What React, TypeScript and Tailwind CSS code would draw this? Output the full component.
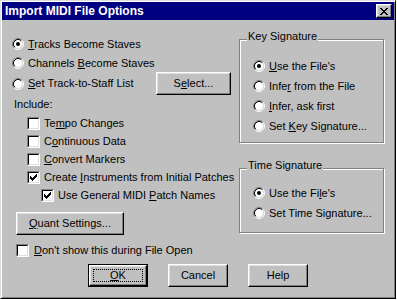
import type { ReactNode } from 'react';

const font = "font-['Liberation_Sans',Arial,sans-serif]";

function Radio({ checked }: { checked?: boolean }) {
  return (
    <svg width="12" height="12" viewBox="0 0 12 12" className="shrink-0">
      <circle cx="6" cy="6" r="4.2" fill="#fff" />
      <path d="M2.11 9.89A5.5 5.5 0 0 1 9.89 2.11" fill="none" stroke="#808080" />
      <path d="M9.89 2.11A5.5 5.5 0 0 1 2.11 9.89" fill="none" stroke="#fff" />
      <path d="M2.82 9.18A4.5 4.5 0 0 1 9.18 2.82" fill="none" stroke="#000" />
      <path d="M9.18 2.82A4.5 4.5 0 0 1 2.82 9.18" fill="none" stroke="#dfdfdf" />
      {checked && <circle cx="6" cy="6" r="2" fill="#000" />}
    </svg>
  );
}

function Check({ checked }: { checked?: boolean }) {
  return (
    <span className="flex w-[13px] h-[13px] shrink-0 border border-t-[#808080] border-l-[#808080] border-r-white border-b-white">
      <span className="flex flex-1 items-center justify-center bg-white border border-t-black border-l-black border-r-[#dfdfdf] border-b-[#dfdfdf]">
        {checked && (
          <svg width="7" height="7" viewBox="0 0 7 7" shapeRendering="crispEdges">
            <path
              d="M6 0h1v1h-1zM5 1h2v1h-2zM0 2h1v1h-1zM4 2h3v1h-3zM0 3h2v1h-2zM3 3h3v1h-3zM0 4h5v1h-5zM1 5h3v1h-3zM2 6h1v1h-1z"
              fill="#000"
            />
          </svg>
        )}
      </span>
    </span>
  );
}

function RadioRow({ checked, children, h = 'h-[20px]' }: { checked?: boolean; children: ReactNode; h?: string }) {
  return (
    <div className={`flex items-center gap-[4px] ${h}`}>
      <Radio checked={checked} />
      <span>{children}</span>
    </div>
  );
}

function CheckRow({ checked, children, indent }: { checked?: boolean; children: ReactNode; indent: string }) {
  return (
    <div className={`flex items-center gap-[4px] h-[18px] ${indent}`}>
      <Check checked={checked} />
      <span>{children}</span>
    </div>
  );
}

function Btn({ children, w, isDefault }: { children: ReactNode; w: string; isDefault?: boolean }) {
  const face = (
    <span className="relative flex flex-1 items-center justify-center border border-t-white border-l-white border-r-black border-b-black shadow-[inset_-1px_-1px_0_#808080,inset_1px_1px_0_#dfdfdf]">
      {isDefault && <span className="absolute inset-[3px] border border-dotted border-black" />}
      <span className="relative">{children}</span>
    </span>
  );
  if (isDefault) {
    return <div className={`flex h-[23px] ${w} border border-black`}>{face}</div>;
  }
  return <div className={`flex h-[23px] ${w}`}>{face}</div>;
}

function Group({ title, h, children }: { title: string; h: string; children: ReactNode }) {
  return (
    <div className={`relative w-[145px] ${h} border border-[#808080] shadow-[inset_1px_1px_0_#fff,1px_1px_0_#fff]`}>
      <span className="absolute -top-[10px] left-[7px] px-[1px] leading-[13px] bg-[#c0c0c0]">{title}</span>
      {children}
    </div>
  );
}

export default function App() {
  return (
    <div className={`${font} text-[11px] leading-[13px] text-black`}>
      <div className="flex flex-col w-[396px] h-[299px] bg-[#c0c0c0] p-[1px] border border-t-[#dfdfdf] border-l-[#dfdfdf] border-r-black border-b-black shadow-[inset_1px_1px_0_#fff,inset_-1px_-1px_0_#808080]">
        <div className="flex items-center justify-between h-[18px] bg-[#000080] pl-[3px] pr-[2px]">
          <span className="text-white font-bold text-[12px]">Import MIDI File Options</span>
          <div className="flex items-center justify-center w-[16px] h-[14px] border border-t-white border-l-white border-r-black border-b-black shadow-[inset_-1px_-1px_0_#808080,inset_1px_1px_0_#dfdfdf] bg-[#c0c0c0]">
            <svg width="8" height="7" viewBox="0 0 8 7" shapeRendering="crispEdges">
              <path
                d="M0 0h2v1h-2zM6 0h2v1h-2zM1 1h2v1h-2zM5 1h2v1h-2zM2 2h4v1h-4zM3 3h2v1h-2zM2 4h4v1h-4zM1 5h2v1h-2zM5 5h2v1h-2zM0 6h2v1h-2zM6 6h2v1h-2z"
                fill="#000"
              />
            </svg>
          </div>
        </div>

        <div className="flex">
          <div className="flex flex-col w-[237px] pl-[10px]">
            <div className="mt-[14px]">
              <RadioRow checked>
                <u>T</u>racks Become Staves
              </RadioRow>
              <RadioRow h="h-[18px]">
                Channels <u>B</u>ecome Staves
              </RadioRow>
            </div>
            <div className="flex items-center justify-between h-[23px] pr-[8px]">
              <RadioRow>
                <u>S</u>et Track-to-Staff List
              </RadioRow>
              <Btn w="w-[75px]">
                S<u>e</u>lect...
              </Btn>
            </div>
            <div className="flex items-center h-[14px] mt-[2px] pl-[2px]">Include:</div>
            <div className="mt-[3px]">
              <CheckRow indent="pl-[15px]">
                Te<u>m</u>po Changes
              </CheckRow>
              <CheckRow indent="pl-[15px]">
                C<u>o</u>ntinuous Data
              </CheckRow>
              <CheckRow indent="pl-[15px]">
                <u>C</u>onvert Markers
              </CheckRow>
              <CheckRow indent="pl-[15px]" checked>
                Create <u>I</u>nstruments from Initial Patches
              </CheckRow>
              <CheckRow indent="pl-[29px]" checked>
                Use General MIDI <u>P</u>atch Names
              </CheckRow>
            </div>
            <div className="mt-[8px] ml-[4px]">
              <Btn w="w-[108px]">
                <u>Q</u>uant Settings...
              </Btn>
            </div>
          </div>

          <div className="flex flex-col">
            <div className="mt-[19px]">
              <Group title="Key Signature" h="h-[104px]">
                <div className="pt-[16px] pl-[13px]">
                  <RadioRow checked>
                    <u>U</u>se the File's
                  </RadioRow>
                  <RadioRow>
                    Infe<u>r</u> from the File
                  </RadioRow>
                  <RadioRow>
                    <u>I</u>nfer, ask first
                  </RadioRow>
                  <RadioRow>
                    Set <u>K</u>ey Signature...
                  </RadioRow>
                </div>
              </Group>
            </div>
            <div className="mt-[25px]">
              <Group title="Time Signature" h="h-[65px]">
                <div className="pt-[14px] pl-[13px]">
                  <RadioRow checked>
                    Use the Fi<u>l</u>e's
                  </RadioRow>
                  <RadioRow>Set Time Signature...</RadioRow>
                </div>
              </Group>
            </div>
          </div>
        </div>

        <div className="flex items-center gap-[5px] h-[17px] mt-[7px] pl-[14px]">
          <Check />
          <span>
            <u>D</u>on't show this during File Open
          </span>
        </div>

        <div className="flex gap-[20px] mt-[5px] pl-[86px]">
          <Btn w="w-[60px]" isDefault>
            <u>O</u>K
          </Btn>
          <Btn w="w-[60px]">Cancel</Btn>
          <Btn w="w-[60px]">Help</Btn>
        </div>
      </div>
    </div>
  );
}
